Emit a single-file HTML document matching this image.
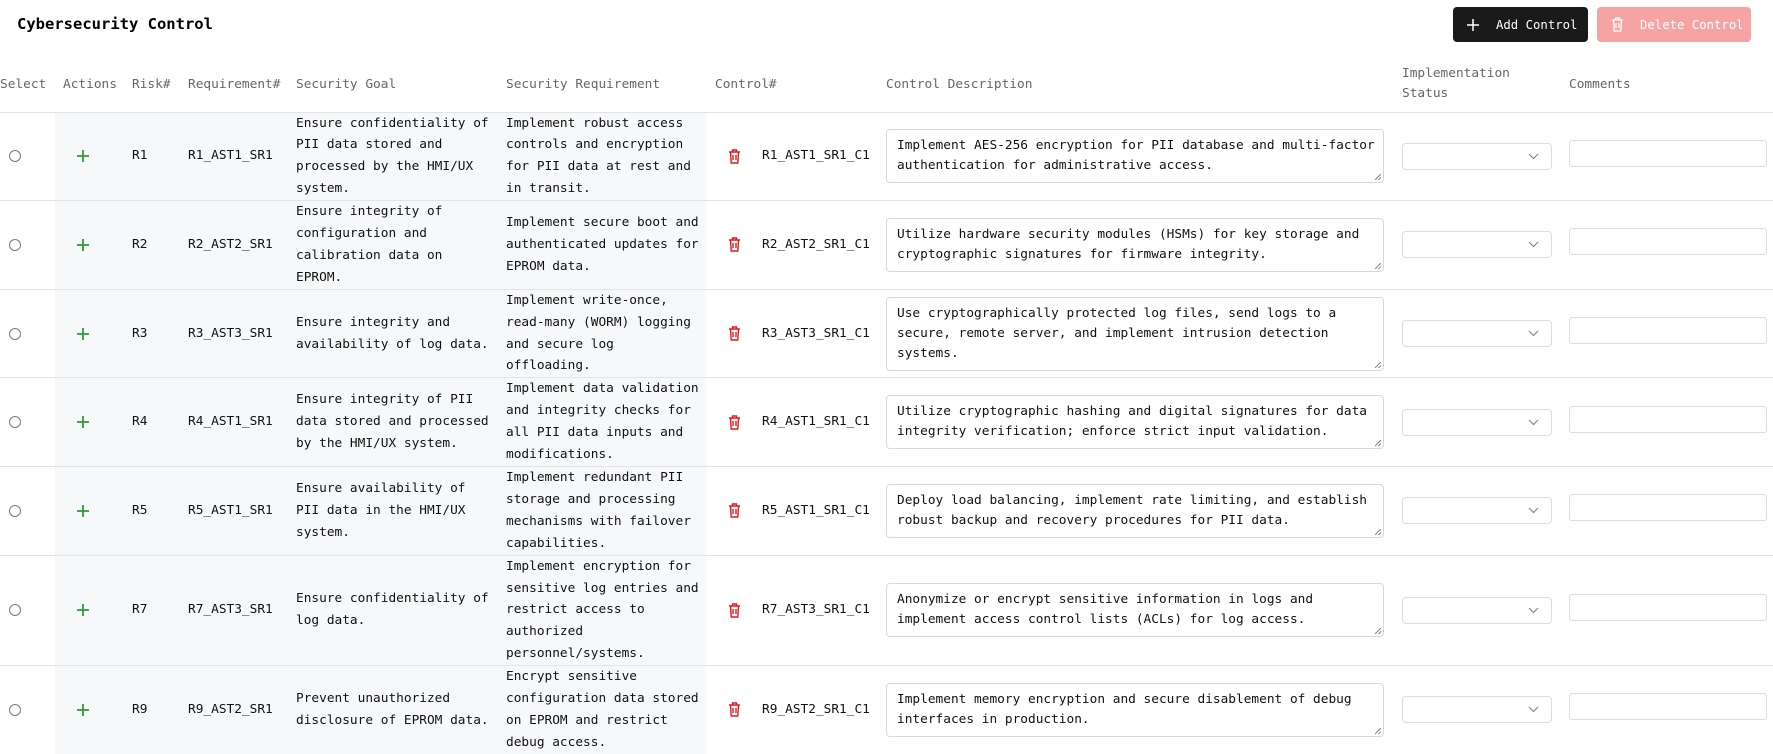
<!DOCTYPE html>
<html><head><meta charset="utf-8"><style>
*{box-sizing:border-box;margin:0;padding:0}
body{width:1773px;height:753px;overflow:hidden;background:#fff;font-family:"DejaVu Sans Mono","Liberation Mono",monospace;font-size:12.8px;color:#111;position:relative}
.title{position:absolute;left:17px;top:15px;font-weight:bold;font-size:15.5px;color:#000}
.btn{position:absolute;top:7px;height:35px;border-radius:4px;color:#fff;font-size:12.3px;display:flex;align-items:center;padding-left:14px}
.add{left:1453px;width:135px;background:#1a1a1a}
.del{left:1597px;width:154px;background:#f5a3a3}
table{position:absolute;left:0;top:58px;border-collapse:collapse;table-layout:fixed;width:1773px}
th{font-weight:normal;color:#666;text-align:left;height:54px;vertical-align:middle;line-height:21px;border-bottom:1.5px solid #e3e3e3;padding:0}
td{vertical-align:middle;line-height:21.9px;padding:0;border-bottom:1.5px solid #e3e3e3}
td svg{display:block}
.sh{background:#f7f8fa}
.g{padding-right:14px}
.s{padding-right:4px}
.radio{display:block;width:12px;height:12px;border:1px solid #777;border-radius:50%;margin-left:9px}
.ta{border:1px solid #d8d8d8;border-radius:4px;padding:6px 8px 6px 10px;line-height:20px;width:498px;position:relative;margin:6px 0}
.ta:after{content:"";position:absolute;right:2px;bottom:2px;width:6px;height:6px;background:linear-gradient(135deg,transparent 45%,#888 45%,#888 55%,transparent 55%,transparent 75%,#888 75%,#888 85%,transparent 85%)}
.sel{width:150px;height:27px;border:1px solid #ddd;border-radius:4px;position:relative}
.sel svg{position:absolute;right:12px;top:9px}
.inp{width:198px;height:27px;border:1px solid #ddd;border-radius:3px;margin-top:-6px}
</style></head><body>
<div class="title">Cybersecurity Control</div>
<div class="btn add"><svg width="12" height="12" viewBox="0 0 12 12"><path d="M6 0v12M0 6h12" stroke="#fff" stroke-width="1.5"/></svg><span style="margin-left:17px">Add Control</span></div>
<div class="btn del"><svg width="13" height="15" viewBox="0 0 13 15" fill="none" stroke="#fff" stroke-width="1.3"><path d="M1 3h11M4.5 3V1h4v2M2.5 3l.7 11h6.6l.7-11M5 6v5M8 6v5"/></svg><span style="margin-left:16px">Delete Control</span></div>
<table>
<colgroup><col style="width:55px"><col style="width:77px"><col style="width:56px"><col style="width:108px"><col style="width:210px"><col style="width:201px"><col style="width:55px"><col style="width:124px"><col style="width:516px"><col style="width:167px"><col style="width:204px"></colgroup>
<tr><th>Select</th><th style="padding-left:8px">Actions</th><th>Risk#</th><th>Requirement#</th><th>Security Goal</th><th>Security Requirement</th><th colspan="2" style="padding-left:8px">Control#</th><th>Control Description</th><th style="line-height:20px;padding-bottom:2px">Implementation<br>Status</th><th>Comments</th></tr>
<tr><td><span class="radio"></span></td><td class="sh" style="padding-left:22px"><svg width="12" height="12" viewBox="0 0 12 12"><path d="M6 0v12M0 6h12" stroke="#2e9a36" stroke-width="1.8"/></svg></td><td class="sh">R1</td><td class="sh">R1_AST1_SR1</td><td class="sh g">Ensure confidentiality of PII data stored and processed by the HMI/UX system.</td><td class="sh s">Implement robust access controls and encryption for PII data at rest and in transit.</td><td style="padding-left:21px"><svg width="13" height="15" viewBox="0 0 13 15" fill="none" stroke="#e8141b" stroke-width="1.4"><path d="M1 3h11M4.5 3V1h4v2M2.5 3l.7 11h6.6l.7-11M5 6v5M8 6v5"/></svg></td><td>R1_AST1_SR1_C1</td><td><div class="ta">Implement AES-256 encryption for PII database and multi-factor authentication for administrative access.</div></td><td><div class="sel"><svg width="11" height="7" viewBox="0 0 11 7"><path d="M1 1l4.5 4.5L10 1" stroke="#888" fill="none" stroke-width="1.2"/></svg></div></td><td><div class="inp"></div></td></tr>
<tr><td><span class="radio"></span></td><td class="sh" style="padding-left:22px"><svg width="12" height="12" viewBox="0 0 12 12"><path d="M6 0v12M0 6h12" stroke="#2e9a36" stroke-width="1.8"/></svg></td><td class="sh">R2</td><td class="sh">R2_AST2_SR1</td><td class="sh g">Ensure integrity of configuration and calibration data on EPROM.</td><td class="sh s">Implement secure boot and authenticated updates for EPROM data.</td><td style="padding-left:21px"><svg width="13" height="15" viewBox="0 0 13 15" fill="none" stroke="#e8141b" stroke-width="1.4"><path d="M1 3h11M4.5 3V1h4v2M2.5 3l.7 11h6.6l.7-11M5 6v5M8 6v5"/></svg></td><td>R2_AST2_SR1_C1</td><td><div class="ta">Utilize hardware security modules (HSMs) for key storage and cryptographic signatures for firmware integrity.</div></td><td><div class="sel"><svg width="11" height="7" viewBox="0 0 11 7"><path d="M1 1l4.5 4.5L10 1" stroke="#888" fill="none" stroke-width="1.2"/></svg></div></td><td><div class="inp"></div></td></tr>
<tr><td><span class="radio"></span></td><td class="sh" style="padding-left:22px"><svg width="12" height="12" viewBox="0 0 12 12"><path d="M6 0v12M0 6h12" stroke="#2e9a36" stroke-width="1.8"/></svg></td><td class="sh">R3</td><td class="sh">R3_AST3_SR1</td><td class="sh g">Ensure integrity and availability of log data.</td><td class="sh s">Implement write-once, read-many (WORM) logging and secure log offloading.</td><td style="padding-left:21px"><svg width="13" height="15" viewBox="0 0 13 15" fill="none" stroke="#e8141b" stroke-width="1.4"><path d="M1 3h11M4.5 3V1h4v2M2.5 3l.7 11h6.6l.7-11M5 6v5M8 6v5"/></svg></td><td>R3_AST3_SR1_C1</td><td><div class="ta">Use cryptographically protected log files, send logs to a secure, remote server, and implement intrusion detection systems.</div></td><td><div class="sel"><svg width="11" height="7" viewBox="0 0 11 7"><path d="M1 1l4.5 4.5L10 1" stroke="#888" fill="none" stroke-width="1.2"/></svg></div></td><td><div class="inp"></div></td></tr>
<tr><td><span class="radio"></span></td><td class="sh" style="padding-left:22px"><svg width="12" height="12" viewBox="0 0 12 12"><path d="M6 0v12M0 6h12" stroke="#2e9a36" stroke-width="1.8"/></svg></td><td class="sh">R4</td><td class="sh">R4_AST1_SR1</td><td class="sh g">Ensure integrity of PII data stored and processed by the HMI/UX system.</td><td class="sh s">Implement data validation and integrity checks for all PII data inputs and modifications.</td><td style="padding-left:21px"><svg width="13" height="15" viewBox="0 0 13 15" fill="none" stroke="#e8141b" stroke-width="1.4"><path d="M1 3h11M4.5 3V1h4v2M2.5 3l.7 11h6.6l.7-11M5 6v5M8 6v5"/></svg></td><td>R4_AST1_SR1_C1</td><td><div class="ta">Utilize cryptographic hashing and digital signatures for data integrity verification; enforce strict input validation.</div></td><td><div class="sel"><svg width="11" height="7" viewBox="0 0 11 7"><path d="M1 1l4.5 4.5L10 1" stroke="#888" fill="none" stroke-width="1.2"/></svg></div></td><td><div class="inp"></div></td></tr>
<tr><td><span class="radio"></span></td><td class="sh" style="padding-left:22px"><svg width="12" height="12" viewBox="0 0 12 12"><path d="M6 0v12M0 6h12" stroke="#2e9a36" stroke-width="1.8"/></svg></td><td class="sh">R5</td><td class="sh">R5_AST1_SR1</td><td class="sh g">Ensure availability of PII data in the HMI/UX system.</td><td class="sh s">Implement redundant PII storage and processing mechanisms with failover capabilities.</td><td style="padding-left:21px"><svg width="13" height="15" viewBox="0 0 13 15" fill="none" stroke="#e8141b" stroke-width="1.4"><path d="M1 3h11M4.5 3V1h4v2M2.5 3l.7 11h6.6l.7-11M5 6v5M8 6v5"/></svg></td><td>R5_AST1_SR1_C1</td><td><div class="ta">Deploy load balancing, implement rate limiting, and establish robust backup and recovery procedures for PII data.</div></td><td><div class="sel"><svg width="11" height="7" viewBox="0 0 11 7"><path d="M1 1l4.5 4.5L10 1" stroke="#888" fill="none" stroke-width="1.2"/></svg></div></td><td><div class="inp"></div></td></tr>
<tr><td><span class="radio"></span></td><td class="sh" style="padding-left:22px"><svg width="12" height="12" viewBox="0 0 12 12"><path d="M6 0v12M0 6h12" stroke="#2e9a36" stroke-width="1.8"/></svg></td><td class="sh">R7</td><td class="sh">R7_AST3_SR1</td><td class="sh g">Ensure confidentiality of log data.</td><td class="sh s">Implement encryption for sensitive log entries and restrict access to authorized personnel/systems.</td><td style="padding-left:21px"><svg width="13" height="15" viewBox="0 0 13 15" fill="none" stroke="#e8141b" stroke-width="1.4"><path d="M1 3h11M4.5 3V1h4v2M2.5 3l.7 11h6.6l.7-11M5 6v5M8 6v5"/></svg></td><td>R7_AST3_SR1_C1</td><td><div class="ta">Anonymize or encrypt sensitive information in logs and implement access control lists (ACLs) for log access.</div></td><td><div class="sel"><svg width="11" height="7" viewBox="0 0 11 7"><path d="M1 1l4.5 4.5L10 1" stroke="#888" fill="none" stroke-width="1.2"/></svg></div></td><td><div class="inp"></div></td></tr>
<tr><td style="border:none"><span class="radio"></span></td><td class="sh" style="padding-left:22px;border:none"><svg width="12" height="12" viewBox="0 0 12 12"><path d="M6 0v12M0 6h12" stroke="#2e9a36" stroke-width="1.8"/></svg></td><td class="sh" style="border:none">R9</td><td class="sh" style="border:none">R9_AST2_SR1</td><td class="sh g" style="border:none">Prevent unauthorized disclosure of EPROM data.</td><td class="sh s" style="border:none">Encrypt sensitive configuration data stored on EPROM and restrict debug access.</td><td style="padding-left:21px;border:none"><svg width="13" height="15" viewBox="0 0 13 15" fill="none" stroke="#e8141b" stroke-width="1.4"><path d="M1 3h11M4.5 3V1h4v2M2.5 3l.7 11h6.6l.7-11M5 6v5M8 6v5"/></svg></td><td style="border:none">R9_AST2_SR1_C1</td><td style="border:none"><div class="ta">Implement memory encryption and secure disablement of debug interfaces in production.</div></td><td style="border:none"><div class="sel"><svg width="11" height="7" viewBox="0 0 11 7"><path d="M1 1l4.5 4.5L10 1" stroke="#888" fill="none" stroke-width="1.2"/></svg></div></td><td style="border:none"><div class="inp"></div></td></tr>
</table>
</body></html>
